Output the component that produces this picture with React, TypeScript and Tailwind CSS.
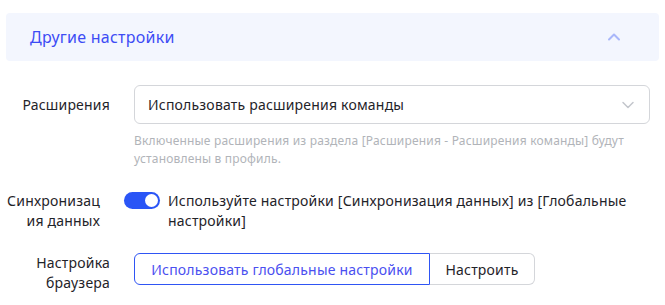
import { ChevronDown, ChevronUp } from 'lucide-react';

export default function App() {
  return (
    <div className="w-[665px] h-[305px] bg-white font-['Noto_Sans',sans-serif] text-[#1f2329] overflow-hidden">
      <div className="mx-[6px] mt-[13px] flex h-[48px] items-center justify-between rounded-[4px] bg-[#f3f6fe] pl-[24px] pr-[35px]">
        <span className="text-[16px] tracking-[0.25px] text-[#3d4cf5]">Другие настройки</span>
        <ChevronUp size={20} strokeWidth={2.4} className="text-[#a9b7fa]" />
      </div>

      <div className="mt-[24px] flex">
        <div className="flex h-[39px] w-[110px] items-center justify-end text-[14px] tracking-[0.2px]">Расширения</div>
        <div className="ml-[24px] w-[516px]">
          <div className="flex h-[39px] items-center justify-between rounded-[6px] border border-[#d4d6da] pl-[13px] pr-[11px] text-[14px] tracking-[0.2px]">
            <span>Использовать расширения команды</span>
            <ChevronDown size={20} strokeWidth={1.8} className="text-[#c3c6cc]" />
          </div>
          <p className="mt-[8px] text-[12px] leading-[18px] tracking-[0.18px] text-[#b1b4b9]">
            Включенные расширения из раздела [Расширения - Расширения команды] будут установлены в профиль.
          </p>
        </div>
      </div>

      <div className="mt-[23px] flex">
        <div className="w-[100px] text-right text-[14px] leading-[20px] tracking-[0.2px]">
          Синхронизац
          <br />
          ия данных
        </div>
        <div className="ml-[24px] flex items-start">
          <div className="mt-[1px] flex h-[17px] w-[36px] items-center justify-end rounded-full bg-[#2a55f6] pr-[2px]">
            <div className="h-[13px] w-[13px] rounded-full bg-white" />
          </div>
          <p className="ml-[8px] w-[470px] text-[14px] leading-[20px] tracking-[0.2px]">
            Используйте настройки [Синхронизация данных] из [Глобальные настройки]
          </p>
        </div>
      </div>

      <div className="mt-[22px] flex">
        <div className="w-[110px] text-right text-[14px] leading-[20px] tracking-[0.2px]">
          Настройка
          <br />
          браузера
        </div>
        <div className="ml-[24px] flex h-[32px] text-[14px] tracking-[0.2px]">
          <button className="flex w-[296px] items-center justify-center rounded-l-[6px] border border-[#2f55f4] text-[#4a4ff0]">
            Использовать глобальные настройки
          </button>
          <button className="flex w-[105px] items-center justify-center rounded-r-[6px] border border-l-0 border-[#d4d6da]">
            Настроить
          </button>
        </div>
      </div>
    </div>
  );
}
